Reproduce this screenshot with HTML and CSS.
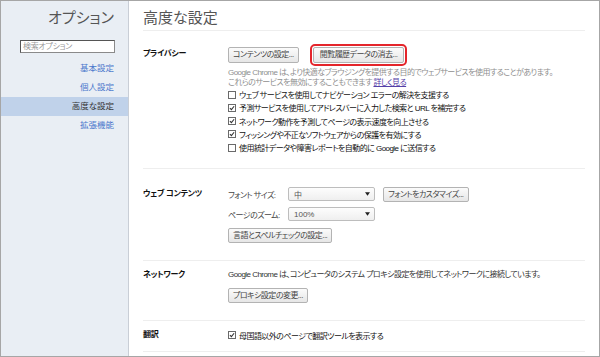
FILE: index.html
```html
<!DOCTYPE html>
<html lang="ja">
<head>
<meta charset="utf-8">
<title>オプション - 高度な設定</title>
<link rel="stylesheet" href="styles.css">
</head>
<body>
<div class="frame">
  <aside class="sidebar">
    <h1 class="side-title">オプション</h1>
    <div class="search"><span class="search-ph">検索オプション</span></div>
    <nav class="nav">
      <a class="nav-item">基本設定</a>
      <a class="nav-item">個人設定</a>
      <a class="nav-item is-active">高度な設定</a>
      <a class="nav-item">拡張機能</a>
    </nav>
  </aside>
  <main class="main">
    <h2 class="page-title">高度な設定</h2>

    <section class="section sec-privacy">
      <div class="sec-label">プライバシー</div>
      <div class="sec-body">
        <div class="btn-row">
          <button class="btn">コンテンツの設定...</button>
          <button class="btn btn-highlight">閲覧履歴データの消去...</button>
        </div>
        <p class="note">Google Chrome は、より快適なブラウジングを提供する目的でウェブサービスを使用することがあります。<br>これらのサービスを無効にすることもできます <a class="more">詳しく見る</a></p>
        <div class="checks">
          <label class="check"><span class="box"></span>ウェブ サービスを使用してナビゲーション エラーの解決を支援する</label>
          <label class="check"><span class="box"><svg viewBox="0 0 8 8"><path d="M1.2 4.2 L3.2 6.2 L6.8 1.6" fill="none" stroke="#333" stroke-width="1.4"/></svg></span>予測サービスを使用してアドレスバーに入力した検索と URL を補完する</label>
          <label class="check"><span class="box"><svg viewBox="0 0 8 8"><path d="M1.2 4.2 L3.2 6.2 L6.8 1.6" fill="none" stroke="#333" stroke-width="1.4"/></svg></span>ネットワーク動作を予測してページの表示速度を向上させる</label>
          <label class="check"><span class="box"><svg viewBox="0 0 8 8"><path d="M1.2 4.2 L3.2 6.2 L6.8 1.6" fill="none" stroke="#333" stroke-width="1.4"/></svg></span>フィッシングや不正なソフトウェアからの保護を有効にする</label>
          <label class="check"><span class="box"></span>使用統計データや障害レポートを自動的に Google に送信する</label>
        </div>
      </div>
    </section>

    <section class="section sec-web">
      <div class="sec-label">ウェブ コンテンツ</div>
      <div class="sec-body">
        <div class="field-row">
          <span class="field-label">フォント サイズ:</span>
          <div class="select"><span>中</span><svg class="arrow" viewBox="0 0 6 4"><path d="M0 0 H6 L3 4 Z" fill="#222"/></svg></div>
          <button class="btn btn-wide">フォントをカスタマイズ...</button>
        </div>
        <div class="field-row">
          <span class="field-label">ページのズーム:</span>
          <div class="select"><span class="num">100%</span><svg class="arrow" viewBox="0 0 6 4"><path d="M0 0 H6 L3 4 Z" fill="#222"/></svg></div>
        </div>
        <div class="btn-row btn-row-lang">
          <button class="btn">言語とスペルチェックの設定...</button>
        </div>
      </div>
    </section>

    <section class="section sec-network">
      <div class="sec-label">ネットワーク</div>
      <div class="sec-body">
        <p class="line">Google Chrome は、コンピュータのシステム プロキシ設定を使用してネットワークに接続しています。</p>
        <div class="btn-row btn-row-proxy">
          <button class="btn">プロキシ設定の変更...</button>
        </div>
      </div>
    </section>

    <section class="section sec-translate">
      <div class="sec-label">翻訳</div>
      <div class="sec-body">
        <label class="check check-tall"><span class="box"><svg viewBox="0 0 8 8"><path d="M1.2 4.2 L3.2 6.2 L6.8 1.6" fill="none" stroke="#333" stroke-width="1.4"/></svg></span>母国語以外のページで翻訳ツールを表示する</label>
      </div>
    </section>
  </main>
</div>
</body>
</html>
```

FILE: styles.css
```css
* { box-sizing: border-box; }
html, body { margin: 0; padding: 0; background: #fff; }
body {
  font-family: "Liberation Sans", "Noto Sans CJK JP", sans-serif;
  font-feature-settings: "palt";
  font-size: 8.5px;
  color: #222;
}
.frame {
  width: 600px;
  height: 357px;
  border: 1px solid #a6a6a6;
  display: flex;
  overflow: hidden;
}
.sidebar {
  width: 128px;
  flex: none;
  background: #e9eef4;
  border-right: 1px solid #c9ced6;
  padding-top: 8px;
}
.side-title {
  margin: 0;
  font-size: 15px;
  font-weight: normal;
  line-height: 18px;
  color: #555;
  text-align: right;
  padding-right: 14px;
}
.search {
  margin: 13px 13px 0 19px;
  height: 13px;
  background: #fff;
  border: 1px solid #8a8a8a;
  border-top-color: #555;
  border-left-color: #555;
  line-height: 11px;
  padding-left: 2px;
}
.search-ph { color: #9a9a9a; font-size: 8px; letter-spacing: -0.3px; }
.nav { margin-top: 6px; display: flex; flex-direction: column; }
.nav-item {
  height: 19px;
  line-height: 19px;
  text-align: right;
  padding-right: 14px;
  color: #4a78cc;
}
.nav-item.is-active { background: #c0d2ea; color: #333; }

.main {
  flex: 1;
  padding: 8px 14px 0 14px;
  font-size: 8px;
  letter-spacing: -0.55px;
}
.page-title {
  margin: 0;
  font-size: 15px;
  font-weight: normal;
  line-height: 18px;
  letter-spacing: 0;
  color: #555;
  padding-bottom: 3px;
  border-bottom: 1px solid #eeeeee;
}
.section {
  display: flex;
  border-bottom: 1px solid #eeeeee;
}
.sec-label {
  width: 85px;
  flex: none;
  font-weight: bold;
  color: #111;
  line-height: 14px;
  letter-spacing: -0.3px;
}
.sec-body { flex: 1; }
.sec-privacy { padding: 16px 0 14px; }
.sec-privacy .sec-label { line-height: 12px; padding-top: 1px; }
.sec-web { padding: 18px 0 17px; }
.sec-network { padding: 7px 0 17px; }
.sec-translate { padding: 7px 0 9px; }

.btn-row { display: flex; gap: 14px; }
.btn {
  font: inherit;
  font-feature-settings: "palt";
  letter-spacing: inherit;
  height: 16px;
  padding: 0 4px;
  line-height: 14px;
  color: #444;
  background: linear-gradient(#fbfbfb, #e6e6e6);
  border: 1px solid #b3b3b3;
  border-radius: 2px;
}
.btn-highlight {
  padding: 0 6px;
  outline: 2px solid #e4252b;
  outline-offset: 1px;
}
.note {
  margin: 5px 0 0;
  color: #8f8f8f;
  line-height: 10px;
}
.more { color: #5540a8; text-decoration: underline; }
.check {
  display: flex;
  align-items: center;
  height: 13.25px;
  color: #111;
}
.check-tall { height: 14px; }
.box {
  width: 8px;
  height: 8px;
  flex: none;
  border: 1px solid #6a6a6a;
  background: #fff;
  margin-right: 3px;
  display: flex;
}
.box svg { width: 6px; height: 6px; }

.field-row {
  display: flex;
  align-items: center;
  height: 14px;
  margin-bottom: 6px;
}
.field-label { width: 60px; flex: none; color: #444; }
.select {
  width: 87px;
  height: 14px;
  border: 1px solid #bdbdbd;
  border-radius: 2px;
  background: linear-gradient(#fdfdfd, #efefef);
  display: flex;
  align-items: center;
  justify-content: space-between;
  padding: 0 4px 0 5px;
  color: #555;
}
.num { letter-spacing: 0; }
.arrow { width: 5px; height: 4px; }
.btn-wide { margin-left: 8px; height: 15px; }
.btn-row-lang { margin-top: 7px; }
.btn-row-lang .btn { height: 15px; }
.line { margin: 0; line-height: 14px; color: #333; }
.btn-row-proxy { margin-top: 6px; }
.btn-row-proxy .btn { height: 15px; }
```
